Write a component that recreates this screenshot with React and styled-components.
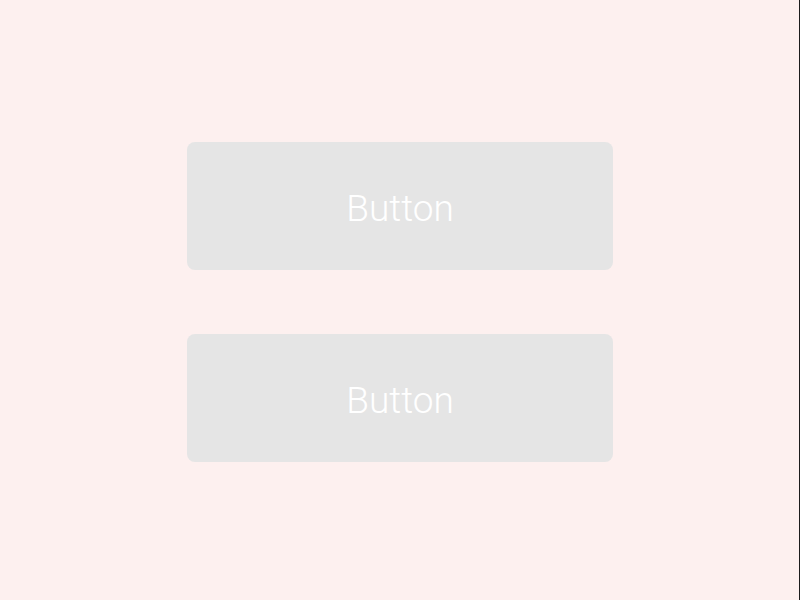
import React from 'react';
import styled, { createGlobalStyle } from 'styled-components';

const GlobalStyle = createGlobalStyle`
    html, body {
        margin: 0;
        padding: 0;
        background-color: #fdf0ef;
    }
`;

const Page = styled.div`
    box-sizing: border-box;
    width: 800px;
    height: 600px;
    background-color: #fdf0ef;
    border-right: 1px solid #1c1c1c;
    display: flex;
    flex-direction: column;
    align-items: center;
    justify-content: center;
    gap: 64px;
    padding: 4px 0 0 1px;
`;

const Button = styled.button`
    width: 426px;
    height: 128px;
    border: none;
    border-radius: 8px;
    background-color: #e5e5e5;
    color: #ffffff;
    font-family: "Roboto", "Helvetica Neue", sans-serif;
    font-weight: 300;
    font-size: 37px;
    cursor: pointer;
    padding: 4px 0 0 0;
`;

export default function App() {
    return (
        <>
            <GlobalStyle />
            <Page>
                <Button>Button</Button>
                <Button>Button</Button>
            </Page>
        </>
    );
}
